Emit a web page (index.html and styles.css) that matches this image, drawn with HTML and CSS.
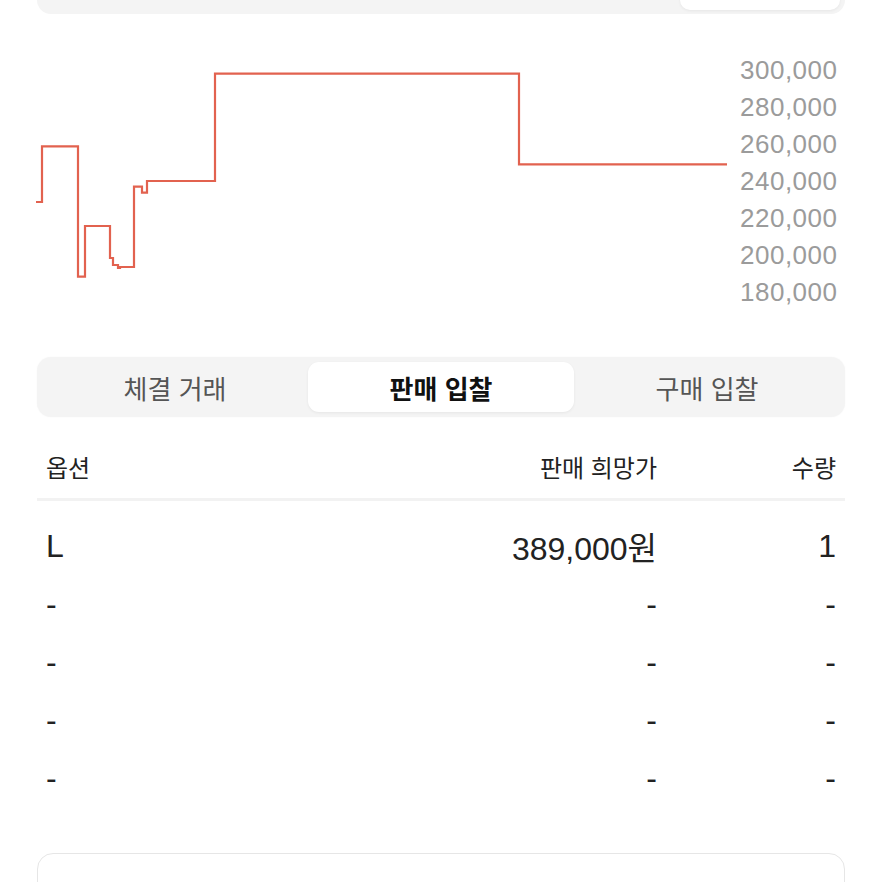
FILE: index.html
```html
<!DOCTYPE html>
<html lang="ko">
<head>
    <meta charset="UTF-8">
    <meta name="viewport" content="width=device-width, initial-scale=1.0">
    <title>시세</title>
    <link rel="stylesheet" href="styles.css">
</head>
<body>
    <div class="page">
        <!-- period selector, mostly scrolled out of view -->
        <div class="range-tabs">
            <button class="range-tab"></button>
            <button class="range-tab"></button>
            <button class="range-tab"></button>
            <button class="range-tab"></button>
            <button class="range-tab active"></button>
        </div>

        <div class="chart">
            <svg class="chart-line" width="690" height="259" viewBox="0 0 690 259">
                <path d="M-1 151 H5 V95.3 H41 V225.7 H48 V175 H73 V207 H76 V214 H81 V217 H83 V216 H97 V135.7 H105 V141.7 H110 V130 H178 V22.7 H482 V113.3 H690"
                      fill="none" stroke="#e2624f" stroke-width="2.2" stroke-linejoin="miter"/>
            </svg>
            <div class="axis">
                <span>300,000</span>
                <span>280,000</span>
                <span>260,000</span>
                <span>240,000</span>
                <span>220,000</span>
                <span>200,000</span>
                <span>180,000</span>
            </div>
        </div>

        <div class="seg-tabs">
            <button class="seg-tab">체결 거래</button>
            <button class="seg-tab active">판매 입찰</button>
            <button class="seg-tab">구매 입찰</button>
        </div>

        <div class="bid-table">
            <div class="bid-head">
                <span>옵션</span>
                <span class="right">판매 희망가</span>
                <span class="right">수량</span>
            </div>
            <div class="bid-row">
                <span>L</span>
                <span class="right">389,000<span class="won">원</span></span>
                <span class="right">1</span>
            </div>
            <div class="bid-row">
                <span>-</span>
                <span class="right">-</span>
                <span class="right">-</span>
            </div>
            <div class="bid-row">
                <span>-</span>
                <span class="right">-</span>
                <span class="right">-</span>
            </div>
            <div class="bid-row">
                <span>-</span>
                <span class="right">-</span>
                <span class="right">-</span>
            </div>
            <div class="bid-row">
                <span>-</span>
                <span class="right">-</span>
                <span class="right">-</span>
            </div>
        </div>

        <button class="more-btn">입찰 내역 더보기</button>
    </div>
</body>
</html>
```

FILE: styles.css
```css
/* General styling */
html, body {
    margin: 0;
    overflow: hidden;
    background-color: #ffffff;
}
body {
    font-family: "Noto Sans CJK KR", "Liberation Sans", sans-serif;
    color: #222;
}
.page {
    padding: 0 37px;
}
button {
    font-family: inherit;
    border: none;
    background: none;
    padding: 0;
    cursor: pointer;
}

/* period tabs */
.range-tabs {
    margin-top: -42px;
    height: 56px;
    box-sizing: border-box;
    padding: 5px 5px 4px;
    display: grid;
    grid-template-columns: repeat(5, 1fr);
    background-color: #f4f4f4;
    border-radius: 14px;
}
.range-tab {
    border-radius: 10px;
}
.range-tab.active {
    background-color: #fff;
    box-shadow: 0 1px 3px rgba(0, 0, 0, 0.06);
}

/* chart */
.chart {
    margin-top: 37px;
    height: 259px;
    display: flex;
}
.chart-line {
    display: block;
    overflow: visible;
}
.axis {
    margin-left: 13px;
    padding-top: 1px;
    display: flex;
    flex-direction: column;
    font-family: "Liberation Sans", sans-serif;
    font-size: 26px;
    letter-spacing: 0.5px;
    line-height: 37px;
    color: #9b9b9b;
}

/* trade tabs */
.seg-tabs {
    margin-top: 47px;
    height: 60px;
    box-sizing: border-box;
    padding: 5px;
    display: grid;
    grid-template-columns: repeat(3, 1fr);
    background-color: #f4f4f4;
    border-radius: 14px;
    box-shadow: 0 0 2px rgba(0, 0, 0, 0.03);
}
.seg-tab {
    font-size: 26px;
    color: #555;
    border-radius: 11px;
}
.seg-tab.active {
    background-color: #fff;
    color: #111;
    font-weight: bold;
    box-shadow: 0 1px 3px rgba(0, 0, 0, 0.06);
}

/* bid table */
.bid-head, .bid-row {
    display: grid;
    grid-template-columns: 1fr 200px 179px;
    padding: 0 9px;
}
.bid-head {
    padding-top: 34px;
    padding-bottom: 15px;
    font-size: 24px;
    line-height: 32px;
    color: #222;
    border-bottom: 3px solid #f2f2f2;
    margin-bottom: 16px;
}
.bid-row {
    font-family: "Liberation Sans", "Noto Sans CJK KR", sans-serif;
    font-size: 32px;
    line-height: 58px;
    height: 58px;
    color: #222;
}
.won {
    font-family: "Noto Sans CJK KR", sans-serif;
}
.right {
    text-align: right;
}

/* more button */
.more-btn {
    display: block;
    width: 100%;
    margin-top: 46px;
    height: 72px;
    box-sizing: border-box;
    padding: 17px 0 0;
    border: 1.5px solid #e6e6e6;
    border-radius: 16px;
    background-color: #fff;
    font-size: 24px;
    line-height: 32px;
    color: #222;
    text-align: center;
}
```
